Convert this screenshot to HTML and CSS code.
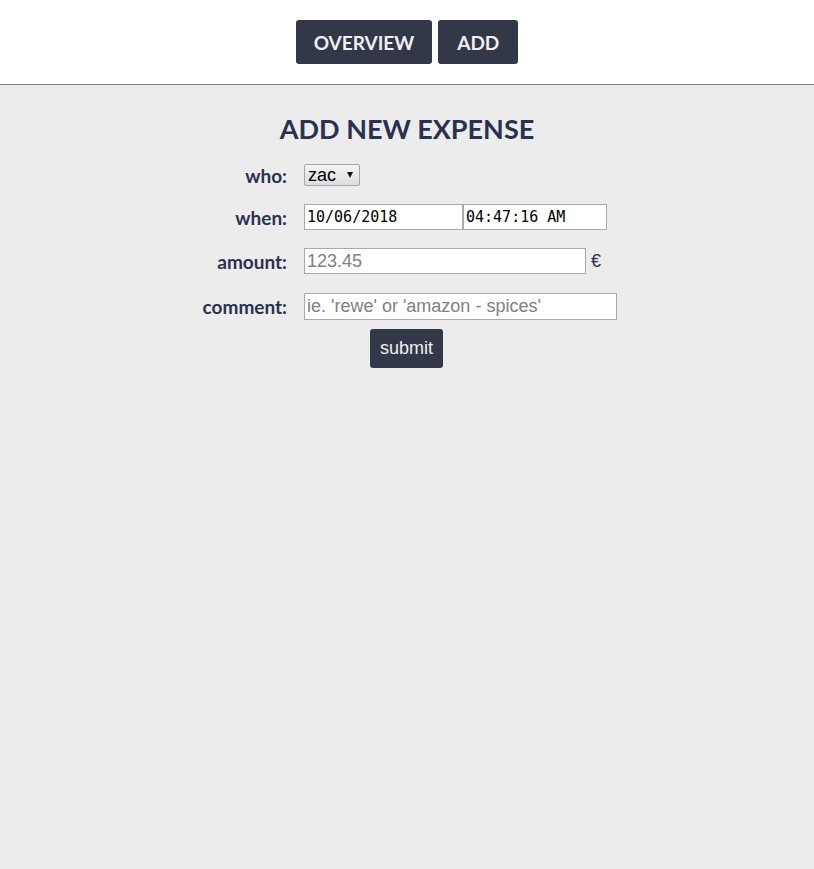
FILE: index.html
```html
<!DOCTYPE html>
<html>
<head>
<meta charset="utf-8">
<link rel="stylesheet" href="styles.css">
</head>
<body>
<header class="topbar">
  <nav class="nav">
    <a class="nav-btn" href="#">OVERVIEW</a>
    <a class="nav-btn" href="#">ADD</a>
  </nav>
</header>
<main class="content">
  <h1 class="title">ADD NEW EXPENSE</h1>
  <form class="form">
    <label class="lbl row-who">who:</label>
    <div class="field row-who"><span class="sel-wrap"><select class="sel"><option>zac</option></select></span></div>
    <label class="lbl row-when">when:</label>
    <div class="field row-when"><input class="inp mono date" type="text" value="10/06/2018"><input class="inp mono time" type="text" value="04:47:16 AM"></div>
    <label class="lbl row-amount">amount:</label>
    <div class="field row-amount"><input class="inp amount" type="text" placeholder="123.45"><span class="cur">€</span></div>
    <label class="lbl row-comment">comment:</label>
    <div class="field row-comment"><input class="inp comment" type="text" placeholder="ie. 'rewe' or 'amazon - spices'"></div>
  </form>
  <div class="actions"><button class="submit" type="button">submit</button></div>
</main>
</body>
</html>
```
FILE: styles.css
```css
html, body { margin: 0; padding: 0; height: 100%; }
body { background: #ececec; font-family: Lato, "Open Sans", sans-serif; color: #2a3150; }
.topbar { background: #fff; height: 85px; box-sizing: border-box; border-bottom: 1px solid #808080; display: flex; justify-content: center; align-items: flex-start; }
.nav { display: flex; gap: 6px; margin-top: 20px; }
.nav-btn { display: flex; align-items: center; justify-content: center; height: 44px; padding: 0 18px; background: #333849; color: #f0f0f0; border-radius: 3px; text-decoration: none; font-weight: 700; font-size: 19px; }
.nav-btn + .nav-btn { padding: 0 19px; }
.content { display: flex; flex-direction: column; align-items: center; }
.title { margin: 28px 0 0; font-size: 27px; line-height: 32px; font-weight: 700; color: #2a3150; }
.form { display: grid; grid-template-columns: 95px 318px; column-gap: 17px; margin-top: 19px; width: 430px; align-items: center; }
.lbl { display: flex; align-items: center; justify-content: flex-end; font-weight: 700; font-size: 19px; }
.field { display: flex; align-items: center; }
.row-who { height: 22px; margin-bottom: 18px; }
.row-when { height: 26px; margin-bottom: 18px; }
.row-amount { height: 26px; margin-bottom: 19px; }
.row-comment { height: 27px; }
.sel-wrap { position: relative; display: inline-block; }
.sel-wrap::after { content: ""; position: absolute; right: 7px; top: 8px; border-left: 3px solid transparent; border-right: 3px solid transparent; border-top: 6px solid #111; pointer-events: none; }
.sel { -webkit-appearance: none; appearance: none; display: block; box-sizing: border-box; font-family: "Liberation Sans", Arial, sans-serif; font-size: 18px; line-height: 20px; height: 22px; width: 56px; padding: 0 0 0 3px; margin: 0; border: 1px solid #a6a6a6; border-radius: 2px; background: linear-gradient(#f4f4f4, #dedede); color: #000; }
.inp { box-sizing: border-box; height: 26px; margin: 0; border: 1px solid #a9a9a9; background: #fff; padding: 0 2px; font-family: "Liberation Sans", Arial, sans-serif; font-size: 18px; color: #000; }
.inp::placeholder { color: #808080; }
.mono { font-family: "DejaVu Sans Mono", "Liberation Mono", monospace; font-size: 15px; }
.date { width: 159px; }
.time { width: 144px; }
.amount { width: 282px; }
.comment { width: 313px; height: 27px; }
.cur { margin-left: 5px; font-size: 18px; font-family: "Liberation Sans", Arial, sans-serif; color: #2a3150; }
.actions { margin-top: 9px; margin-left: -1px; }
.submit { height: 39px; width: 73px; padding: 0; border: none; border-radius: 3px; background: #333849; color: #f0f0f0; font-family: "Liberation Sans", Arial, sans-serif; font-size: 18px; }
```
